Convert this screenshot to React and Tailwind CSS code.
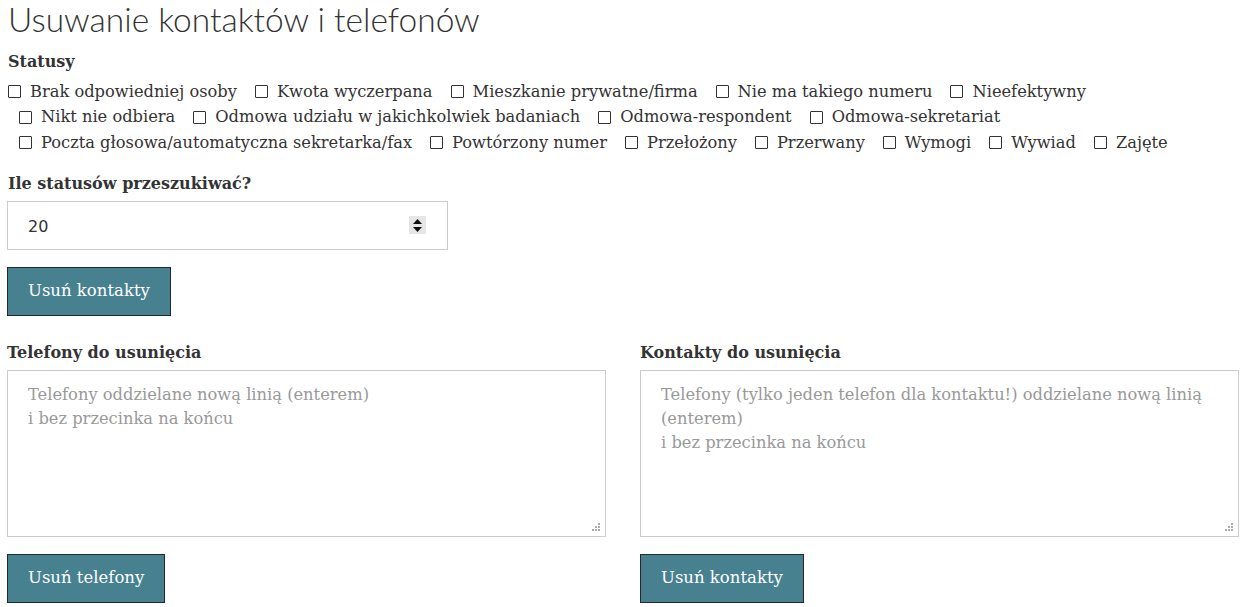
import React from 'react';

const rows = [
    { pad: 'pl-0', items: ['Brak odpowiedniej osoby', 'Kwota wyczerpana', 'Mieszkanie prywatne/firma', 'Nie ma takiego numeru', 'Nieefektywny'] },
    { pad: 'pl-[11px]', items: ['Nikt nie odbiera', 'Odmowa udziału w jakichkolwiek badaniach', 'Odmowa-respondent', 'Odmowa-sekretariat'] },
    { pad: 'pl-[11px]', items: ['Poczta głosowa/automatyczna sekretarka/fax', 'Powtórzony numer', 'Przełożony', 'Przerwany', 'Wymogi', 'Wywiad', 'Zajęte'] },
];

function Check({ label }) {
    return (
        <label className="flex items-center gap-[9px]">
            <span className="w-[13px] h-[13px] border border-[#333] bg-white rounded-[1px] shrink-0"></span>
            <span>{label}</span>
        </label>
    );
}

function Button({ children }) {
    return (
        <button className="h-[49px] px-[20px] bg-[#47818f] border border-[#1f2a2e] text-white text-[16.5px] leading-none">
            {children}
        </button>
    );
}

function Spinner() {
    return (
        <div className="w-[17px] h-[18px] bg-[#e6e6e6] flex flex-col items-center justify-center gap-[3px]">
            <svg width="9" height="5" viewBox="0 0 9 5"><path d="M4.5 0 L9 5 L0 5 Z" fill="#111" /></svg>
            <svg width="9" height="5" viewBox="0 0 9 5"><path d="M0 0 L9 0 L4.5 5 Z" fill="#111" /></svg>
        </div>
    );
}

function Grip() {
    return (
        <svg className="absolute right-[4px] bottom-[4px]" width="9" height="9" viewBox="0 0 9 9">
            <rect x="6" y="0" width="2" height="2" fill="#aaa" />
            <rect x="3" y="3" width="2" height="2" fill="#aaa" />
            <rect x="6" y="3" width="2" height="2" fill="#aaa" />
            <rect x="0" y="6" width="2" height="2" fill="#aaa" />
            <rect x="3" y="6" width="2" height="2" fill="#aaa" />
            <rect x="6" y="6" width="2" height="2" fill="#aaa" />
        </svg>
    );
}

function Area({ title, lines, button }) {
    return (
        <div className="flex flex-col">
            <h3 className="font-bold text-[16px] leading-[24px] mb-[5px]">{title}</h3>
            <div className="relative h-[167px] border border-[#cccccc] bg-white px-[20px] pt-[12px] text-[#999] text-[16.3px] leading-[24px]">
                {lines.map((l, i) => <div key={i}>{l}</div>)}
                <Grip />
            </div>
            <div className="mt-[17px]">
                <Button>{button}</Button>
            </div>
        </div>
    );
}

export default function App() {
    return (
        <div className="bg-white min-h-[607px] px-[7px] text-[#333] text-[16px]" style={{ fontFamily: '"DejaVu Serif", serif' }}>
            <h1 className="text-[33.5px] leading-[38px] font-light text-[#333] pl-[1px]" style={{ fontFamily: 'Lato, sans-serif' }}>
                Usuwanie kontaktów i telefonów
            </h1>

            {/* Statusy */}
            <h3 className="font-bold mt-[12px] leading-[24px] pl-[1px]">Statusy</h3>
            <div className="mt-[5px] pl-[1px] text-[16.25px]">
                {rows.map((r, i) => (
                    <div key={i} className={`flex gap-[18px] h-[25.5px] items-center ${r.pad}`}>
                        {r.items.map(t => <Check key={t} label={t} />)}
                    </div>
                ))}
            </div>

            <h3 className="font-bold mt-[16px] leading-[24px] pl-[1px]">Ile statusów przeszukiwać?</h3>
            <div className="mt-[5px] w-[441px] h-[49px] border border-[#cccccc] flex items-center justify-between pl-[20px] pr-[21px]">
                <span className="text-[16px] pt-[3px]" style={{ fontFamily: '"DejaVu Sans", sans-serif' }}>20</span>
                <Spinner />
            </div>
            <div className="mt-[17px]">
                <Button>Usuń kontakty</Button>
            </div>

            <div className="grid grid-cols-[599px_599px] gap-[34px] mt-[25px]">
                <Area title="Telefony do usunięcia" button="Usuń telefony" lines={['Telefony oddzielane nową linią (enterem)', 'i bez przecinka na końcu']} />
                <Area title="Kontakty do usunięcia" button="Usuń kontakty" lines={['Telefony (tylko jeden telefon dla kontaktu!) oddzielane nową linią', '(enterem)', 'i bez przecinka na końcu']} />
            </div>
        </div>
    );
}
